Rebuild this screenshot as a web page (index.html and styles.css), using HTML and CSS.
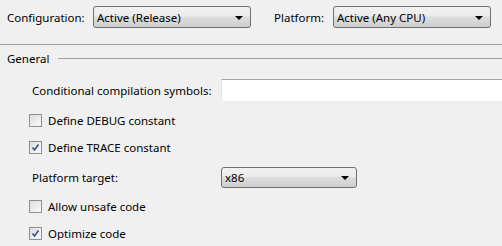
FILE: index.html
```html
<!DOCTYPE html>
<html lang="en">
  <head>
    <meta charset="UTF-8" />
    <title>Build</title>
    <link rel="stylesheet" href="styles.css">
  </head>
  <body>
    <div class="toolbar">
      <span class="label">Configuration:</span>
      <div class="combo combo-config">
        <span>Active (Release)</span>
        <span class="arrow"></span>
      </div>
      <span class="label label-platform">Platform:</span>
      <div class="combo combo-platform">
        <span>Active (Any CPU)</span>
        <span class="arrow"></span>
      </div>
    </div>
    <div class="divider"></div>

    <div class="group-head">
      <span>General</span>
      <div class="group-line"></div>
    </div>

    <div class="form">
      <div class="row row-symbols">
        <span class="field-label">Conditional compilation symbols:</span>
        <div class="textbox"></div>
      </div>
      <div class="check-row">
        <span class="box"></span>
        <span>Define DEBUG constant</span>
      </div>
      <div class="check-row">
        <span class="box checked"><svg width="9" height="9" viewBox="0 0 9 9"><path d="M1.5 4.5 L3.5 7 L7.5 1.5" fill="none" stroke="#3d4f8f" stroke-width="1.6"/></svg></span>
        <span>Define TRACE constant</span>
      </div>
      <div class="row row-target">
        <span class="field-label">Platform target:</span>
        <div class="combo combo-target">
          <span>x86</span>
          <span class="arrow"></span>
        </div>
      </div>
      <div class="check-row">
        <span class="box"></span>
        <span>Allow unsafe code</span>
      </div>
      <div class="check-row">
        <span class="box checked"><svg width="9" height="9" viewBox="0 0 9 9"><path d="M1.5 4.5 L3.5 7 L7.5 1.5" fill="none" stroke="#3d4f8f" stroke-width="1.6"/></svg></span>
        <span>Optimize code</span>
      </div>
    </div>
  </body>
</html>
```

FILE: styles.css
```css
body {
  margin: 0;
  background: #f0f0f0;
  font-family: "Noto Sans", "Open Sans", sans-serif;
  font-size: 11.5px;
  color: #000;
  overflow: hidden;
}
.toolbar {
  display: flex;
  align-items: center;
  padding: 6px 0 0 7px;
  height: 22px;
}
.label {
  width: 86px;
}
.label-platform {
  width: 59px;
  margin-left: 23px;
}
.combo {
  box-sizing: border-box;
  height: 22px;
  border: 1px solid #707070;
  border-radius: 3px;
  background: linear-gradient(#f2f2f2 0%, #ebebeb 45%, #dddddd 50%, #cfcfcf 100%);
  display: flex;
  align-items: center;
  justify-content: space-between;
  padding: 0 7px 0 3px;
}
.combo-config,
.combo-platform {
  width: 158px;
}
.combo-target {
  width: 136px;
  height: 21px;
}
.arrow {
  width: 0;
  height: 0;
  border-left: 4px solid transparent;
  border-right: 4px solid transparent;
  border-top: 4px solid #000;
  margin-top: 1px;
}
.divider {
  height: 1px;
  background: #a0a0a0;
  margin-top: 16px;
}
.group-head {
  display: flex;
  align-items: center;
  padding-left: 7px;
  margin-top: 5px;
  height: 16px;
}
.group-line {
  flex: 1;
  height: 1px;
  background: #a0a0a0;
  margin-left: 9px;
  margin-top: 1px;
}
.form {
  padding-left: 29px;
}
.row {
  display: flex;
  align-items: center;
}
.field-label {
  width: 189px;
  padding-left: 3px;
}
.row-symbols {
  margin-top: 13px;
  height: 22px;
}
.textbox {
  flex: 1;
  height: 22px;
  box-sizing: border-box;
  background: #fff;
  border-top: 1px solid #a5a5a5;
  border-left: 1px solid #e2e3ea;
}
.check-row {
  display: flex;
  align-items: center;
  height: 13px;
  margin-top: 13px;
}
.check-row + .check-row {
  margin-top: 14px;
}
.box {
  box-sizing: border-box;
  width: 13px;
  height: 13px;
  border: 1px solid #8e8f8f;
  background: linear-gradient(135deg, #dcdcdc, #fbfbfb);
  margin-right: 6px;
  display: flex;
  align-items: center;
  justify-content: center;
}
.row-target {
  margin-top: 13px;
  height: 21px;
}
.row-target + .check-row {
  margin-top: 12px;
}
```
